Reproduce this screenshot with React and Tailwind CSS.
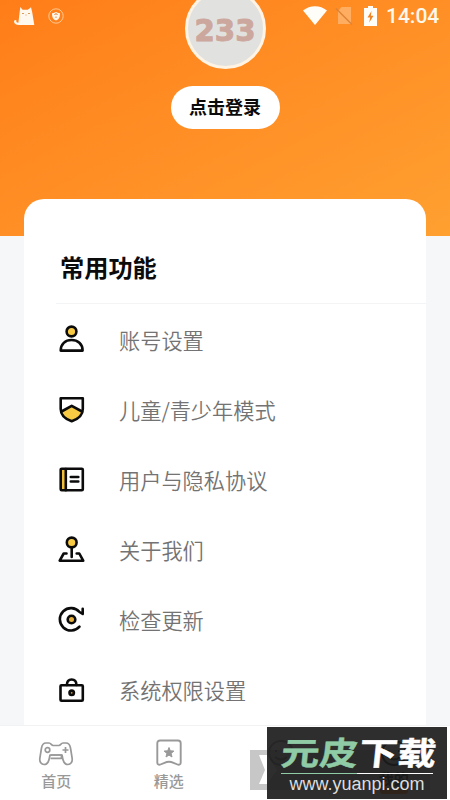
const menuItems = [
  { label: '账号设置', icon: AccountIcon },
  { label: '儿童/青少年模式', icon: ShieldIcon },
  { label: '用户与隐私协议', icon: BookIcon },
  { label: '关于我们', icon: JoystickIcon },
  { label: '检查更新', icon: UpdateIcon },
  { label: '系统权限设置', icon: LockIcon },
];

function MenuSvg({ children }) {
  return (
    <svg
      className="h-7 w-7 shrink-0 overflow-visible"
      viewBox="0 0 28 28"
      fill="none"
      stroke="#0b0b0b"
      strokeWidth="2.6"
      strokeLinecap="round"
      strokeLinejoin="round"
      aria-hidden="true"
    >
      {children}
    </svg>
  );
}

function AccountIcon() {
  return (
    <MenuSvg>
      <circle cx="13.500" cy="6.500" r="4.900" fill="#f9cb45" />
      <path d="M2.700 25.600C2.700 19 7.300 15 13.500 15S24.600 19 24.600 25.600z" />
    </MenuSvg>
  );
}

function ShieldIcon() {
  return (
    <MenuSvg>
      <path d="M3 16.500 13.700 10.500 24.500 16.500C23 21.500 18.500 25 13.700 26.500 9 25 4.500 21.500 3 16.500z" fill="#f9cb45" stroke="none" />
      <path d="M2.700 3.300h22.100v10.700c0 6-4.500 10-11.100 12.300C7.200 24 2.700 20 2.700 14z" />
      <path d="M3.500 16.500 13.700 10.800 24 16.500" />
    </MenuSvg>
  );
}

function BookIcon() {
  return (
    <MenuSvg>
      <path d="M3 4h5v21H3z" fill="#f0bd3b" stroke="none" />
      <rect x="2.700" y="3.700" width="22.100" height="21.600" rx="1" />
      <path d="M7.800 4v21.300M12.800 12h7.500M12.800 16.500h7.500" />
    </MenuSvg>
  );
}

function JoystickIcon() {
  return (
    <MenuSvg>
      <circle cx="13.700" cy="7.500" r="4.900" fill="#f9cb45" />
      <path d="M13.700 12.500v9.500M8.500 18.500H5.700l-4 7.200h23.500l-3.900-7.200h-2.600" />
    </MenuSvg>
  );
}

function UpdateIcon() {
  return (
    <MenuSvg>
      <path d="M21.500 21.700A11.200 11.200 0 1 1 21.500 7l3.200 2V3.800" />
      <circle cx="13.500" cy="14.500" r="3.800" fill="#e8b13b" />
    </MenuSvg>
  );
}

function LockIcon() {
  return (
    <MenuSvg>
      <rect x="2.500" y="10.300" width="22.300" height="15.500" rx="1" />
      <path d="M8.900 10c0-3.500 1.700-5.500 4.700-5.500s4.800 2 4.800 5.500" />
      <circle cx="13.700" cy="17.800" r="2.200" fill="#d99b22" />
    </MenuSvg>
  );
}

function CatIcon() {
  return (
    <svg className="h-5 w-[22px]" viewBox="0 0 22 20" fill="#fff8ee" aria-hidden="true">
      <path d="M6.300 1 8.600 3.800h5.200L17 1.200l1.200 5L20.300 19H5c-3 0-5-1.500-5-3.500C0 14 2.300 13.500 2.600 15c-.8.500-.3 1.700 1.800 1.700L5.500 7z" />
      <path d="M8 7.500h2M14 7.500h2M11.500 9h1" stroke="#d8904b" strokeWidth=".9" />
    </svg>
  );
}

function GuardIcon() {
  return (
    <svg className="h-4 w-4" viewBox="0 0 16 16" fill="none" aria-hidden="true">
      <circle cx="8" cy="8" r="7.200" stroke="#ffd0a0" strokeWidth=".9" />
      <path d="M4 5.200C6 5 7 4.500 8 4c1 .5 2 1 4 1.200 0 4-1 6-4 7.300-3-1.300-4-3.300-4-7.300z" fill="#fff5e8" />
      <path d="M8 10V8.500M6.700 7a1.300 1.300 0 1 1 2.600 0" stroke="#e08a40" />
    </svg>
  );
}

function StatusBar() {
  return (
    <div className="absolute inset-x-0 top-0 flex h-8 items-center pl-[14px] pr-[10px]">
      <CatIcon />
      <div className="ml-[12px]">
        <GuardIcon />
      </div>
      <div className="ml-auto flex items-center">
        <svg className="h-5 w-6" viewBox="0 0 24 20" fill="#fffdf8" aria-hidden="true">
          <path d="M0 4.500C7-1.200 17-1.200 24 4.500L12 19z" />
        </svg>
        <svg className="ml-[8px] h-5 w-[18px]" viewBox="0 0 18 20" aria-hidden="true">
          <path d="M6.500 1H16v17H3V5z" fill="#ffad60" />
          <path d="M1 2.500 17 18.500" stroke="#de8336" strokeWidth="1.500" />
        </svg>
        <svg className="ml-[11px] h-5 w-[13px]" viewBox="0 0 13 20" aria-hidden="true">
          <path d="M4 0h5v2h4v18H0V2h4z" fill="#fffdf8" />
          <path d="M7.500 5 3.500 11.500h2.600L5.300 16.500l4.200-6.700H6.900z" fill="#ef8424" />
        </svg>
        <span className="ml-[9px] w-[54px] whitespace-nowrap font-[Roboto] text-[21px] font-medium leading-8 text-[#fff8ec]">
          14:04
        </span>
      </div>
    </div>
  );
}

function GamepadIcon() {
  return (
    <svg className="h-7 w-9" viewBox="0 0 36 28" fill="none" stroke="#999" strokeWidth="1.700" strokeLinejoin="round" aria-hidden="true">
      <path d="M8 3h3c2 0 2.500 2.500 4 2.500h6c1.500 0 2-2.500 4-2.500h3c3 0 4 2 4.500 5l1.600 10c.7 4-1.600 6.500-4.100 6.500-4 0-5-3.500-6-9.500h-12c-1 6-2 9.500-6 9.500-2.500 0-4.800-2.500-4.100-6.500L3.500 8C4 5 5 3 8 3z" />
      <path d="M12.500 15h11v3.300h-11" />
      <circle cx="9.500" cy="10" r="2.300" />
      <path d="M27.500 7v6M24.500 10h6" />
    </svg>
  );
}

function FeaturedIcon() {
  return (
    <svg className="h-7 w-9" viewBox="0 0 36 28" fill="none" stroke="#999" strokeWidth="1.900" strokeLinejoin="round" aria-hidden="true">
      <path d="M9 1.500h18c1.700 0 2.700 1 2.700 2.700v19.300c0 2-1.500 2.800-3.200 2l-4-1.700c-3-1.300-6-1.300-9 0l-4 1.700c-1.700.8-3.200 0-3.200-2V4.200c0-1.700 1-2.700 2.700-2.700z" />
      <path d="m18 8.500 1.300 3.300 3.600.3-2.800 2.300.9 3.600-3-1.900-3 1.900.9-3.600-2.800-2.300 3.600-.3z" fill="#999" strokeWidth="1" />
    </svg>
  );
}

function FaceIcon() {
  return (
    <svg className="h-7 w-9" viewBox="0 0 36 28" fill="none" stroke="currentColor" strokeWidth="2" aria-hidden="true">
      <circle cx="18" cy="14" r="12" />
      <path d="M13 11v2M23 11v2M12 18q6 5 12 0" />
    </svg>
  );
}

function BottomNav() {
  return (
    <nav className="grid h-[75px] w-[450px] shrink-0 grid-cols-4 border-t border-[#f1f2f3] bg-white text-[15px] font-medium text-[#999]">
      <div className="flex flex-col items-center pt-[14px]">
        <GamepadIcon />
        <span className="mt-[2px] leading-[22px]">首页</span>
      </div>
      <div className="flex flex-col items-center pt-[13px]">
        <FeaturedIcon />
        <span className="mt-[3px] leading-[22px]">精选</span>
      </div>
      <div className="flex flex-col items-center pt-[13px]">
        <FaceIcon />
      </div>
      <div className="flex flex-col items-center pt-[13px] text-black">
        <FaceIcon />
        <span className="mt-[3px] font-bold leading-[18px]">我的</span>
        <div className="h-[6px] w-7 rounded-full bg-[#ff7a1c]"></div>
      </div>
    </nav>
  );
}

function SiteBadge() {
  return (
    <>
      <div className="absolute left-[250px] top-[750px] h-10 w-[180px] bg-black/22">
        <svg className="h-10 w-10" viewBox="0 0 40 40" aria-hidden="true">
          <path d="M9 5h8l10 15-10 14H9l6-14z" fill="#fff" />
        </svg>
      </div>
      <div className="absolute left-[267px] top-[727px] flex h-[72px] w-[180px] flex-col items-center bg-[#1c1c1c]/92">
        <svg className="h-[46px] w-[180px] overflow-visible" viewBox="0 0 180 46" aria-hidden="true">
          <g transform="translate(13 38) skewX(-6) scale(1 .83)" fontFamily="Noto Sans CJK SC" fontSize="38.500" fontWeight="700">
            <text x="0" y="0" fill="#8fcca6" stroke="#8fcca6" strokeWidth=".5">元皮</text>
            <text x="78" y="0" fill="#fff" stroke="#fff" strokeWidth=".5">下载</text>
          </g>
        </svg>
        <div className="flex h-px w-[152px]">
          <div className="w-1/2 bg-[#8fcca6]"></div>
          <div className="w-1/2 bg-white"></div>
        </div>
        <span className="font-['Liberation_Sans'] text-[18px] leading-5 text-[#dddddd]">
          www.yuanpi.com
        </span>
      </div>
    </>
  );
}

export default function App() {
  return (
    <div className="relative flex h-[800px] w-[450px] flex-col overflow-hidden bg-[#f5f7f9] font-['Noto_Sans_CJK_SC',sans-serif]">
      <header className="flex h-[236px] shrink-0 flex-col items-center bg-linear-to-br from-[#ff7d18] to-[#ffa031]">
        <div className="-mt-3 flex h-[81px] w-[81px] shrink-0 items-center justify-center rounded-full border-[3px] border-[#fff3e3] bg-[#e1e2df]">
          <svg className="h-10 w-[70px] overflow-visible" viewBox="0 0 70 40" aria-hidden="true">
            <text
              x="4.500"
              y="31.500"
              textLength="61"
              lengthAdjust="spacingAndGlyphs"
              fontFamily="DejaVu Sans"
              fontSize="31"
              fontWeight="700"
              fill="#cca79d"
              stroke="#cca79d"
              strokeWidth="1"
            >
              233
            </text>
          </svg>
        </div>
        <button className="mt-[17px] h-[43px] w-[109px] rounded-full bg-white pb-[2px] text-[18px] font-bold text-[#0b0b0b]">
          点击登录
        </button>
      </header>

      <main className="-mt-[37px] mx-6 h-[526px] w-[402px] shrink-0 overflow-hidden rounded-t-[20px] bg-white">
        <h1 className="h-[104px] pl-9 pt-[50px] text-[24.2px] font-bold leading-9 text-[#0b0b0b]">常用功能</h1>
        <ul className="ml-8 border-t border-[#f3f4f5]">
          {menuItems.map(({ label, icon: Icon }) => (
            <li key={label} className="flex h-[70px] items-center gap-[33px] pl-[2px]">
              <Icon />
              <span className="pt-px text-[21.2px] font-[350] text-[#737373]">{label}</span>
            </li>
          ))}
        </ul>
      </main>

      <BottomNav />
      <StatusBar />
      <SiteBadge />
    </div>
  );
}
